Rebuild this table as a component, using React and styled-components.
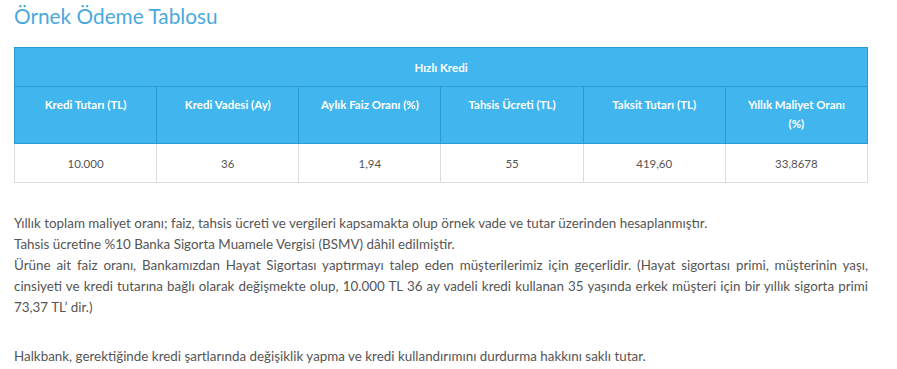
import React from "react";
import styled, { createGlobalStyle } from "styled-components";

const GlobalStyle = createGlobalStyle`
  body {
    margin: 0;
    background: #ffffff;
    font-family: "Lato", "Open Sans", sans-serif;
  }
  *, *::before, *::after {
    box-sizing: border-box;
  }
`;

const Page = styled.div`
  width: 868px;
  padding: 3px 0 0 14px;
`;

const Title = styled.h2`
  margin: 0 0 18px;
  font-size: 20.8px;
  font-weight: 400;
  color: #4aa9dd;
  line-height: 26px;
`;

const Table = styled.table`
  width: 854px;
  border-collapse: collapse;
  table-layout: fixed;
  font-size: 11.5px;
`;

const GroupCell = styled.th`
  background: #41b6ee;
  color: #ffffff;
  font-weight: 700;
  height: 39px;
  padding: 0;
  border: 1px solid #2a9ad0;
  text-align: center;
`;

const HeadCell = styled.th`
  background: #41b6ee;
  color: #ffffff;
  font-weight: 700;
  height: 57px;
  padding: 8px 14px 0;
  vertical-align: top;
  line-height: 19px;
  border: 1px solid #2a9ad0;
  text-align: center;
`;

const DataCell = styled.td`
  height: 39px;
  padding: 0;
  text-align: center;
  color: #555555;
  border: 1px solid #dddddd;
  border-top-color: #2a9ad0;
`;

const Notes = styled.div`
  margin-top: 30px;
  color: #555555;
  font-size: 13.4px;
  line-height: 21px;
`;

const Line = styled.p`
  margin: 0;
  text-align: ${(p) => (p.$justify ? "justify" : "left")};
`;

const Spacer = styled.div`
  height: 28px;
`;

const headers = [
  "Kredi Tutarı (TL)",
  "Kredi Vadesi (Ay)",
  "Aylık Faiz Oranı (%)",
  "Tahsis Ücreti (TL)",
  "Taksit Tutarı (TL)",
  "Yıllık Maliyet Oranı (%)",
];

const values = ["10.000", "36", "1,94", "55", "419,60", "33,8678"];

export default function App() {
  return (
    <>
      <GlobalStyle />
      <Page>
        <Title>Örnek Ödeme Tablosu</Title>
        <Table>
          <thead>
            <tr>
              <GroupCell colSpan={6}>Hızlı Kredi</GroupCell>
            </tr>
            <tr>
              {headers.map((h) => (
                <HeadCell key={h}>{h}</HeadCell>
              ))}
            </tr>
          </thead>
          <tbody>
            <tr>
              {values.map((v) => (
                <DataCell key={v}>{v}</DataCell>
              ))}
            </tr>
          </tbody>
        </Table>
        <Notes>
          <Line>
            Yıllık toplam maliyet oranı; faiz, tahsis ücreti ve vergileri kapsamakta olup örnek vade ve tutar üzerinden hesaplanmıştır.
          </Line>
          <Line>Tahsis ücretine %10 Banka Sigorta Muamele Vergisi (BSMV) dâhil edilmiştir.</Line>
          <Line $justify>
            Ürüne ait faiz oranı, Bankamızdan Hayat Sigortası yaptırmayı talep eden müşterilerimiz için geçerlidir. (Hayat sigortası primi, müşterinin yaşı, cinsiyeti ve kredi tutarına bağlı olarak değişmekte olup, 10.000 TL 36 ay vadeli kredi kullanan 35 yaşında erkek müşteri için bir yıllık sigorta primi 73,37 TL’ dir.)
          </Line>
          <Spacer />
          <Line>
            Halkbank, gerektiğinde kredi şartlarında değişiklik yapma ve kredi kullandırımını durdurma hakkını saklı tutar.
          </Line>
        </Notes>
      </Page>
    </>
  );
}
